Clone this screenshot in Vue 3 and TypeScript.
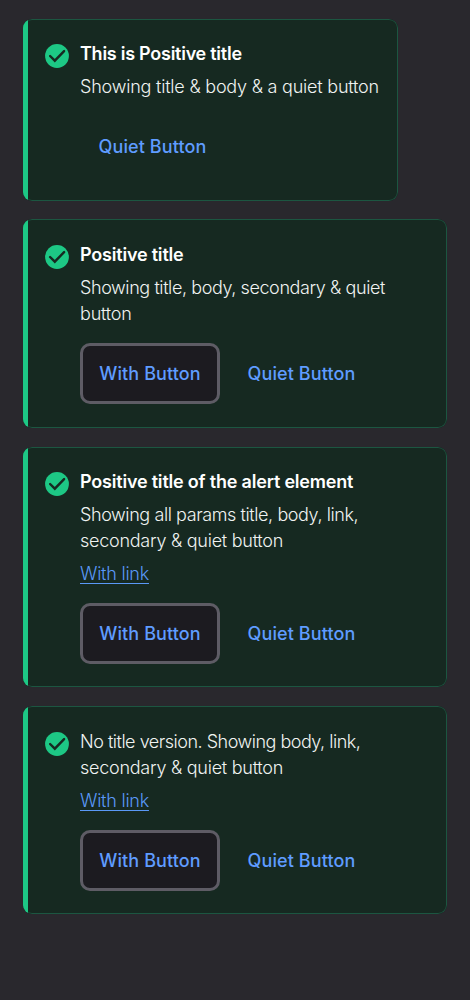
<script setup lang="ts">
interface BodyLine {
  text: string
  fit: 'normal' | 'loose' | 'snug' | 'tight'
}

interface AlertItem {
  id: string
  title?: string
  body: BodyLine[]
  link?: string
  secondary?: string
  quiet: string
}

const alerts: AlertItem[] = [
  {
    id: 'compact',
    title: 'This is Positive title',
    body: [{ text: 'Showing title & body & a quiet button', fit: 'loose' }],
    quiet: 'Quiet Button',
  },
  {
    id: 'double',
    title: 'Positive title',
    body: [
      { text: 'Showing title, body, secondary & quiet', fit: 'snug' },
      { text: 'button', fit: 'loose' },
    ],
    secondary: 'With Button',
    quiet: 'Quiet Button',
  },
  {
    id: 'full',
    title: 'Positive title of the alert element',
    body: [
      { text: 'Showing all params title, body, link,', fit: 'snug' },
      { text: 'secondary & quiet button', fit: 'normal' },
    ],
    link: 'With link',
    secondary: 'With Button',
    quiet: 'Quiet Button',
  },
  {
    id: 'untitled',
    body: [
      { text: 'No title version. Showing body, link,', fit: 'tight' },
      { text: 'secondary & quiet button', fit: 'normal' },
    ],
    link: 'With link',
    secondary: 'With Button',
    quiet: 'Quiet Button',
  },
]
</script>

<template>
  <main class="page">
    <section v-for="item in alerts" :key="item.id" class="alert" :class="item.id" role="status">
      <svg class="icon" viewBox="0 0 24 24" aria-hidden="true">
        <circle class="disc" cx="12" cy="12" r="11.9" />
        <path class="check" d="M5.1 12L9.8 16.7L19.1 7.1" />
      </svg>
      <div class="content">
        <h2 v-if="item.title" class="title">{{ item.title }}</h2>
        <p class="body">
          <span v-for="line in item.body" :key="line.text" class="line" :class="line.fit">{{ line.text }}</span>
        </p>
        <a v-if="item.link" class="link">{{ item.link }}</a>
        <div class="actions">
          <button v-if="item.secondary" class="btn secondary" type="button">{{ item.secondary }}</button>
          <button class="btn quiet" type="button">{{ item.quiet }}</button>
        </div>
      </div>
    </section>
  </main>
</template>

<style>
html, body { margin: 0; background: #29282d; }
</style>

<style scoped>
.page {
  box-sizing: border-box;
  height: 1000px;
  padding: 19px 23px 0;
  display: flex;
  flex-direction: column;
  gap: 19px;
  background: #29282d;
  font-family: Inter, "Liberation Sans", sans-serif;
  font-size: 18px;
  line-height: 26px;
}
.alert {
  position: relative;
  box-sizing: border-box;
  flex: none;
  display: flex;
  gap: 11.5px;
  width: 424px;
  padding: 22px 16px 0 21.5px;
  border-radius: 9px;
  background: #162921;
  overflow: hidden;
}
.alert::before {
  content: "";
  position: absolute;
  inset: 0;
  border: 1px solid #1c5641;
  border-radius: 9px;
}
.alert::after {
  content: "";
  position: absolute;
  inset: 0 auto 0 0;
  width: 5px;
  background: #1dc885;
}
.compact { width: 375.4px; height: 182px; margin-bottom: -1px; }
.double { height: 209px; padding-top: 22.6px; }
.full { height: 240px; }
.untitled { height: 208px; padding-top: 22.6px; }
.icon { flex: none; width: 24px; height: 24px; margin-top: 3px; }
.disc { fill: #1dc885; }
.check { fill: none; stroke: #162921; stroke-width: 2.4; stroke-linecap: round; }
.content { min-width: 0; white-space: nowrap; }
.title { margin: 0 0 7px; font-size: 18px; font-weight: 600; color: #fff; letter-spacing: -0.2px; }
.compact .title { letter-spacing: -0.26px; }
.body { margin: 0; font-weight: 300; color: #f0f3f1; }
.line { display: block; }
.loose { letter-spacing: -0.21px; }
.normal { letter-spacing: -0.26px; }
.snug { letter-spacing: -0.41px; }
.tight { letter-spacing: -0.49px; }
.link {
  display: block;
  width: max-content;
  margin-top: 7px;
  font-weight: 300;
  color: #5a98f6;
  text-decoration: underline;
  text-decoration-thickness: 1px;
  text-underline-offset: 3px;
  letter-spacing: -0.24px;
}
.actions { display: flex; gap: 9px; margin-top: 16.4px; }
.compact .actions, .full .actions { margin-top: 16px; }
.btn {
  box-sizing: border-box;
  height: 61px;
  padding: 0;
  border: 0;
  border-radius: 10px;
  background: transparent;
  font: 500 18px/26px Inter, "Liberation Sans", sans-serif;
  letter-spacing: 0.1px;
  color: #5f9cff;
}
.double .btn, .untitled .btn { padding-top: 1px; }
.secondary { width: 140px; border: 3px solid #5e5c65; background: #1c1b20; }
.quiet { width: 145px; }
</style>
